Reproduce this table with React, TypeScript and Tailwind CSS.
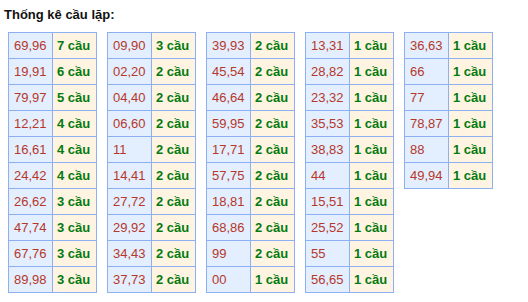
import React from "react";

const tables: [string, string][][] = [
  [
    ["69,96", "7 cầu"],
    ["19,91", "6 cầu"],
    ["79,97", "5 cầu"],
    ["12,21", "4 cầu"],
    ["16,61", "4 cầu"],
    ["24,42", "4 cầu"],
    ["26,62", "3 cầu"],
    ["47,74", "3 cầu"],
    ["67,76", "3 cầu"],
    ["89,98", "3 cầu"],
  ],
  [
    ["09,90", "3 cầu"],
    ["02,20", "2 cầu"],
    ["04,40", "2 cầu"],
    ["06,60", "2 cầu"],
    ["11", "2 cầu"],
    ["14,41", "2 cầu"],
    ["27,72", "2 cầu"],
    ["29,92", "2 cầu"],
    ["34,43", "2 cầu"],
    ["37,73", "2 cầu"],
  ],
  [
    ["39,93", "2 cầu"],
    ["45,54", "2 cầu"],
    ["46,64", "2 cầu"],
    ["59,95", "2 cầu"],
    ["17,71", "2 cầu"],
    ["57,75", "2 cầu"],
    ["18,81", "2 cầu"],
    ["68,86", "2 cầu"],
    ["99", "2 cầu"],
    ["00", "1 cầu"],
  ],
  [
    ["13,31", "1 cầu"],
    ["28,82", "1 cầu"],
    ["23,32", "1 cầu"],
    ["35,53", "1 cầu"],
    ["38,83", "1 cầu"],
    ["44", "1 cầu"],
    ["15,51", "1 cầu"],
    ["25,52", "1 cầu"],
    ["55", "1 cầu"],
    ["56,65", "1 cầu"],
  ],
  [
    ["36,63", "1 cầu"],
    ["66", "1 cầu"],
    ["77", "1 cầu"],
    ["78,87", "1 cầu"],
    ["88", "1 cầu"],
    ["49,94", "1 cầu"],
  ],
];

export default function App() {
  return (
    <div
      className="w-[528px] h-[302px] bg-white overflow-hidden"
      style={{ fontFamily: '"Liberation Sans", Arial, sans-serif' }}
    >
      <div className="pt-[7px] pl-[4px] text-[13px] leading-[15px] font-bold text-[#111111]">
        Thống kê cầu lặp:
      </div>
      <div className="flex items-start gap-[10px] pl-[8px] mt-[10px]">
        {tables.map((rows, ti) => (
          <div
            key={ti}
            className="grid grid-cols-[44px_44px] border-l border-t border-[#8cb0f2]"
          >
            {rows.map(([num, cnt], ri) => (
              <React.Fragment key={ri}>
                <div className="h-[26px] flex items-center pl-[5px] bg-[#e3eeff] border-r border-b border-[#8cb0f2] text-[13px] text-[#b5382a]">
                  {num}
                </div>
                <div className="h-[26px] flex items-center pl-[4px] bg-[#fff4e1] border-r border-b border-[#8cb0f2] text-[13px] font-bold text-[#047a10]">
                  {cnt}
                </div>
              </React.Fragment>
            ))}
          </div>
        ))}
      </div>
    </div>
  );
}
